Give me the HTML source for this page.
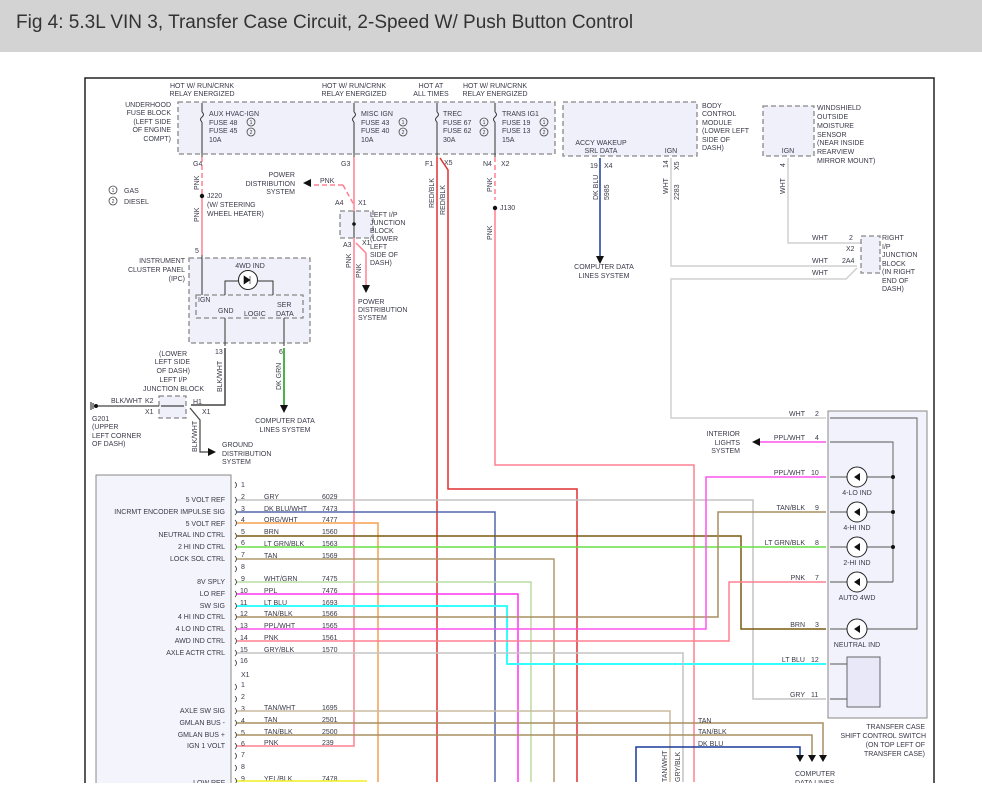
<!DOCTYPE html>
<html><head><meta charset="utf-8"><style>
html,body{margin:0;padding:0;background:#fff;width:982px;height:805px;overflow:hidden}
.hdr{position:absolute;left:0;top:0;width:982px;height:52px;background:#d3d3d3}
.hdr span{position:absolute;left:16px;top:12px;font:19px "Liberation Sans",sans-serif;color:#333}
svg{position:absolute;left:0;top:0}
text{font-family:"Liberation Sans",sans-serif;font-size:7px;fill:#3a3a4a}
.r{text-anchor:end}.m{text-anchor:middle}
.d{fill:#f0f0fa;stroke:#888;stroke-width:1.3;stroke-dasharray:5 3}
.w{fill:none;stroke-width:1.5}
</style></head><body>
<div class="hdr"><span>Fig 4: 5.3L VIN 3, Transfer Case Circuit, 2-Speed W/ Push Button Control</span></div>
<svg width="982" height="805" viewBox="0 0 982 805">
<rect x="85" y="78" width="849" height="720" fill="#fff" stroke="#222" stroke-width="1.5"/>
<!-- fuse block -->
<rect class="d" x="178" y="102" width="377" height="52"/>
<g stroke="#333" stroke-width="1" fill="none">
<path d="M202 103V112M202 122V157M354 103V112M354 122V157M437 103V112M437 122V157M495 103V112M495 122V157"/>
<path d="M202 112q3 2.5 0 5q-3 2.5 0 5M354 112q3 2.5 0 5q-3 2.5 0 5M437 112q3 2.5 0 5q-3 2.5 0 5M495 112q3 2.5 0 5q-3 2.5 0 5"/>
</g>
<text x="202" y="88" class="m">HOT W/ RUN/CRNK</text><text x="202" y="96" class="m">RELAY ENERGIZED</text>
<text x="354" y="88" class="m">HOT W/ RUN/CRNK</text><text x="354" y="96" class="m">RELAY ENERGIZED</text>
<text x="431" y="88" class="m">HOT AT</text><text x="431" y="96" class="m">ALL TIMES</text>
<text x="495" y="88" class="m">HOT W/ RUN/CRNK</text><text x="495" y="96" class="m">RELAY ENERGIZED</text>
<text x="171" y="107" class="r">UNDERHOOD</text><text x="171" y="115" class="r">FUSE BLOCK</text><text x="171" y="124" class="r">(LEFT SIDE</text><text x="171" y="132" class="r">OF ENGINE</text><text x="171" y="141" class="r">COMPT)</text>
<g><text x="209" y="116">AUX HVAC-IGN</text><text x="209" y="125">FUSE 48</text><text x="209" y="133">FUSE 45</text><text x="209" y="142">10A</text>
<text x="361" y="116">MISC IGN</text><text x="361" y="125">FUSE 43</text><text x="361" y="133">FUSE 40</text><text x="361" y="142">10A</text>
<text x="443" y="116">TREC</text><text x="443" y="125">FUSE 67</text><text x="443" y="133">FUSE 62</text><text x="443" y="142">30A</text>
<text x="502" y="116">TRANS IG1</text><text x="502" y="125">FUSE 19</text><text x="502" y="133">FUSE 13</text><text x="502" y="142">15A</text></g>
<g fill="none" stroke="#444" stroke-width=".8"><circle cx="251" cy="122" r="4"/><circle cx="251" cy="132" r="4"/><circle cx="403" cy="122" r="4"/><circle cx="403" cy="132" r="4"/><circle cx="484" cy="122" r="4"/><circle cx="484" cy="132" r="4"/><circle cx="544" cy="122" r="4"/><circle cx="544" cy="132" r="4"/><circle cx="113" cy="190" r="4"/><circle cx="113" cy="201" r="4"/></g>
<g><text x="251" y="124" class="m" style="font-size:5px">1</text><text x="251" y="134" class="m" style="font-size:5px">2</text><text x="403" y="124" class="m" style="font-size:5px">1</text><text x="403" y="134" class="m" style="font-size:5px">2</text><text x="484" y="124" class="m" style="font-size:5px">1</text><text x="484" y="134" class="m" style="font-size:5px">2</text><text x="544" y="124" class="m" style="font-size:5px">1</text><text x="544" y="134" class="m" style="font-size:5px">2</text><text x="113" y="192" class="m" style="font-size:5px">1</text><text x="113" y="203" class="m" style="font-size:5px">2</text></g>
<text x="124" y="193">GAS</text><text x="124" y="204">DIESEL</text>
<text x="193" y="166">G4</text><text x="341" y="166">G3</text><text x="425" y="166">F1</text><text x="444" y="165">X5</text><text x="483" y="166">N4</text><text x="501" y="166">X2</text>
<!-- wires top -->
<path class="w" stroke="#ff8090" stroke-dasharray="5 3" d="M202 157V195"/>
<path class="w" stroke="#ff8090" d="M202 197V255"/>
<circle cx="202" cy="196" r="2.2" fill="#111"/><text x="207" y="198">J220</text><text x="207" y="207">(W/ STEERING</text><text x="207" y="216">WHEEL HEATER)</text>
<text x="199" y="190" transform="rotate(-90 199 190)">PNK</text>
<text x="199" y="222" transform="rotate(-90 199 222)">PNK</text>
<path class="w" stroke="#ff8090" d="M354 157V746H237"/>
<path class="w" stroke="#ff8090" stroke-dasharray="5 3" d="M343 185H310M343 185L354 205"/>
<path d="M303 183l8-4v8z" fill="#111"/>
<text x="320" y="183">PNK</text>
<text x="295" y="177" class="r">POWER</text><text x="295" y="186" class="r">DISTRIBUTION</text><text x="295" y="194" class="r">SYSTEM</text>
<rect class="d" x="340" y="211" width="33" height="27"/>
<path stroke="#333" d="M354 211V238"/><circle cx="354" cy="224" r="1.8" fill="#111"/>
<text x="335" y="205">A4</text><text x="358" y="205">X1</text><text x="343" y="247">A3</text><text x="362" y="245">X1</text>
<g><text x="370" y="217">LEFT I/P</text><text x="370" y="225">JUNCTION</text><text x="370" y="233">BLOCK</text><text x="370" y="241">(LOWER</text><text x="370" y="249">LEFT</text><text x="370" y="257">SIDE OF</text><text x="370" y="265">DASH)</text></g>
<path class="w" stroke="#ff8090" d="M356 243L366 253V285"/><path d="M362 285h8l-4 8z" fill="#111"/>
<text x="351" y="268" transform="rotate(-90 351 268)">PNK</text><text x="361" y="278" transform="rotate(-90 361 278)">PNK</text>
<text x="358" y="304">POWER</text><text x="358" y="312">DISTRIBUTION</text><text x="358" y="320">SYSTEM</text>
<path class="w" stroke="#e03030" d="M437 157V782M440 158L448 170V489H577V782"/>
<text x="434" y="208" transform="rotate(-90 434 208)">RED/BLK</text><text x="445" y="215" transform="rotate(-90 445 215)">RED/BLK</text>
<path class="w" stroke="#ff8090" stroke-dasharray="5 3" d="M495 157V200"/>
<path class="w" stroke="#ff8090" d="M495 210V465H694V782"/>
<circle cx="495" cy="208" r="2.2" fill="#111"/><text x="500" y="210">J130</text>
<text x="492" y="192" transform="rotate(-90 492 192)">PNK</text><text x="492" y="240" transform="rotate(-90 492 240)">PNK</text>
<!-- BCM -->
<rect class="d" x="563" y="102" width="134" height="54"/>
<g><text x="702" y="108">BODY</text><text x="702" y="116">CONTROL</text><text x="702" y="125">MODULE</text><text x="702" y="133">(LOWER LEFT</text><text x="702" y="142">SIDE OF</text><text x="702" y="150">DASH)</text></g>
<text x="601" y="145" class="m">ACCY WAKEUP</text><text x="601" y="153" class="m">SRL DATA</text><text x="671" y="153" class="m">IGN</text>
<text x="590" y="168">19</text><text x="604" y="168">X4</text>
<path class="w" stroke="#1a3a9a" d="M600 158V256"/><path d="M596 256h8l-4 8z" fill="#111"/>
<text x="598" y="200" transform="rotate(-90 598 200)">DK BLU</text><text x="609" y="200" transform="rotate(-90 609 200)">5985</text>
<text x="604" y="269" class="m">COMPUTER DATA</text><text x="604" y="278" class="m">LINES SYSTEM</text>
<text x="668" y="168" transform="rotate(-90 668 168)">14</text><text x="679" y="170" transform="rotate(-90 679 170)">X5</text>
<text x="668" y="194" transform="rotate(-90 668 194)">WHT</text><text x="679" y="200" transform="rotate(-90 679 200)">2283</text>
<path class="w" stroke="#d0d0d0" d="M671 158V266H857M857 268L846 279H671V418H826"/>
<rect class="d" x="763" y="106" width="51" height="50"/>
<text x="788" y="153" class="m">IGN</text>
<g><text x="817" y="110">WINDSHIELD</text><text x="817" y="119">OUTSIDE</text><text x="817" y="128">MOISTURE</text><text x="817" y="137">SENSOR</text><text x="817" y="145">(NEAR INSIDE</text><text x="817" y="154">REARVIEW</text><text x="817" y="163">MIRROR MOUNT)</text></g>
<text x="785" y="167" transform="rotate(-90 785 167)">4</text><text x="785" y="194" transform="rotate(-90 785 194)">WHT</text>
<path class="w" stroke="#d0d0d0" d="M788 158V243H861"/>
<rect class="d" x="861" y="236" width="19" height="37"/>
<text x="812" y="240">WHT</text><text x="849" y="240">2</text><text x="846" y="251">X2</text><text x="812" y="263">WHT</text><text x="842" y="263">2A4</text><text x="812" y="275">WHT</text>
<g><text x="882" y="240">RIGHT</text><text x="882" y="249">I/P</text><text x="882" y="257">JUNCTION</text><text x="882" y="266">BLOCK</text><text x="882" y="274">(IN RIGHT</text><text x="882" y="283">END OF</text><text x="882" y="291">DASH)</text></g>
<!-- IPC -->
<rect class="d" x="189" y="258" width="121" height="85"/>
<rect class="d" x="196" y="295" width="107" height="23"/>
<text x="250" y="268" class="m">4WD IND</text>
<circle cx="248" cy="280" r="9.5" fill="#fff" stroke="#222"/><path d="M244 276l6 4-6 4zM250 276v8" fill="#111" stroke="#111" stroke-width=".6"/>
<path d="M225 295V281H238M258 281H273V295" fill="none" stroke="#333"/>
<path d="M202 255V295" stroke="#333"/>
<text x="198" y="302">IGN</text><text x="218" y="313">GND</text><text x="244" y="316">LOGIC</text><text x="277" y="307">SER</text><text x="276" y="316">DATA</text>
<text x="185" y="263" class="r">INSTRUMENT</text><text x="185" y="272" class="r">CLUSTER PANEL</text><text x="185" y="281" class="r">(IPC)</text>
<text x="195" y="253">5</text>
<path d="M225 318V346M284 318V346" stroke="#333"/>
<text x="215" y="354">13</text><text x="279" y="354">6</text>
<path class="w" stroke="#444" d="M225 348V405H191"/>
<text x="222" y="392" transform="rotate(-90 222 392)">BLK/WHT</text>
<path class="w" stroke="#119911" d="M284 348V405"/><path d="M280 405h8l-4 8z" fill="#111"/>
<text x="281" y="390" transform="rotate(-90 281 390)">DK GRN</text>
<text x="285" y="423" class="m">COMPUTER DATA</text><text x="285" y="432" class="m">LINES SYSTEM</text>
<text x="187" y="356" class="r">(LOWER</text><text x="190" y="364" class="r">LEFT SIDE</text><text x="190" y="373" class="r">OF DASH)</text><text x="187" y="382" class="r">LEFT I/P</text><text x="204" y="391" class="r">JUNCTION BLOCK</text>
<rect class="d" x="159" y="396" width="27" height="22"/>
<path fill="none" stroke="#444" stroke-width="1.2" d="M95 406H159M161 406H184M190 408L200 420V452H208"/>
<path d="M208 448l8 4-8 4z" fill="#111"/>
<path d="M91 402v8M93 403v6" stroke="#111"/><circle cx="96" cy="406" r="2" fill="#111"/>
<text x="111" y="403">BLK/WHT</text><text x="145" y="403">K2</text><text x="145" y="414">X1</text><text x="193" y="404">H1</text><text x="202" y="414">X1</text>
<text x="92" y="421">G201</text><text x="92" y="429">(UPPER</text><text x="92" y="438">LEFT CORNER</text><text x="92" y="446">OF DASH)</text>
<text x="197" y="452" transform="rotate(-90 197 452)">BLK/WHT</text>
<text x="222" y="447">GROUND</text><text x="222" y="456">DISTRIBUTION</text><text x="222" y="464">SYSTEM</text>
<!-- module -->
<rect x="96" y="475" width="135" height="320" fill="#f4f4fc" stroke="#888"/>
<g>
<text x="225" y="502" class="r">5 VOLT REF</text><text x="225" y="514" class="r">INCRMT ENCODER IMPULSE SIG</text><text x="225" y="526" class="r">5 VOLT REF</text><text x="225" y="537" class="r">NEUTRAL IND CTRL</text><text x="225" y="549" class="r">2 HI IND CTRL</text><text x="225" y="561" class="r">LOCK SOL CTRL</text><text x="225" y="584" class="r">8V SPLY</text><text x="225" y="596" class="r">LO REF</text><text x="225" y="608" class="r">SW SIG</text><text x="225" y="619" class="r">4 HI IND CTRL</text><text x="225" y="631" class="r">4 LO IND CTRL</text><text x="225" y="643" class="r">AWD IND CTRL</text><text x="225" y="655" class="r">AXLE ACTR CTRL</text><text x="225" y="713" class="r">AXLE SW SIG</text><text x="225" y="725" class="r">GMLAN BUS -</text><text x="225" y="737" class="r">GMLAN BUS +</text><text x="225" y="748" class="r">IGN 1 VOLT</text><text x="225" y="785" class="r">LOW REF</text></g>
<g style="font-size:6.5px">
<text x="241" y="487">1</text><text x="241" y="499">2</text><text x="241" y="511">3</text><text x="241" y="522">4</text><text x="241" y="534">5</text><text x="241" y="545">6</text><text x="241" y="557">7</text><text x="241" y="569">8</text><text x="241" y="581">9</text><text x="240" y="593">10</text><text x="240" y="605">11</text><text x="240" y="616">12</text><text x="240" y="628">13</text><text x="240" y="640">14</text><text x="240" y="652">15</text><text x="240" y="663">16</text><text x="241" y="677">X1</text><text x="241" y="687">1</text><text x="241" y="699">2</text><text x="241" y="711">3</text><text x="241" y="723">4</text><text x="241" y="735">5</text><text x="241" y="746">6</text><text x="241" y="757">7</text><text x="241" y="769">8</text><text x="241" y="781">9</text></g>
<g fill="none" stroke="#333" stroke-width=".8"><path d="M235 482q3 3 0 6M235 497q3 3 0 6M235 509q3 3 0 6M235 520q3 3 0 6M235 533q3 3 0 6M235 544q3 3 0 6M235 556q3 3 0 6M235 566q3 3 0 6M235 579q3 3 0 6M235 591q3 3 0 6M235 603q3 3 0 6M235 614q3 3 0 6M235 626q3 3 0 6M235 638q3 3 0 6M235 650q3 3 0 6M235 660q3 3 0 6M235 684q3 3 0 6M235 696q3 3 0 6M235 708q3 3 0 6M235 720q3 3 0 6M235 732q3 3 0 6M235 743q3 3 0 6M235 753q3 3 0 6M235 765q3 3 0 6M235 778q3 3 0 6"/></g>
<g style="font-size:6.5px">
<text x="264" y="499">GRY</text><text x="322" y="499">6029</text><text x="264" y="511">DK BLU/WHT</text><text x="322" y="511">7473</text><text x="264" y="522">ORG/WHT</text><text x="322" y="522">7477</text><text x="264" y="534">BRN</text><text x="322" y="534">1560</text><text x="264" y="546">LT GRN/BLK</text><text x="322" y="546">1563</text><text x="264" y="558">TAN</text><text x="322" y="558">1569</text><text x="264" y="581">WHT/GRN</text><text x="322" y="581">7475</text><text x="264" y="593">PPL</text><text x="322" y="593">7476</text><text x="264" y="605">LT BLU</text><text x="322" y="605">1693</text><text x="264" y="616">TAN/BLK</text><text x="322" y="616">1566</text><text x="264" y="628">PPL/WHT</text><text x="322" y="628">1565</text><text x="264" y="640">PNK</text><text x="322" y="640">1561</text><text x="264" y="652">GRY/BLK</text><text x="322" y="652">1570</text><text x="264" y="710">TAN/WHT</text><text x="322" y="710">1695</text><text x="264" y="722">TAN</text><text x="322" y="722">2501</text><text x="264" y="734">TAN/BLK</text><text x="322" y="734">2500</text><text x="264" y="745">PNK</text><text x="322" y="745">239</text><text x="264" y="781">YEL/BLK</text><text x="322" y="781">7478</text></g>
<g class="w" fill="none">
<path stroke="#c4c4c4" d="M237 500H753V699H826"/>
<path stroke="#5566aa" d="M237 512H495V782"/>
<path stroke="#f5a050" d="M237 523H378V782"/>
<path stroke="#7a5a10" d="M237 536H741V629H826"/>
<path stroke="#66e044" d="M237 547H826"/>
<path stroke="#b09a6a" d="M237 559H554V782"/>
<path stroke="#bcdca4" d="M237 582H531V782"/>
<path stroke="#ff33ee" d="M237 594H518V782"/>
<path stroke="#33ffff" stroke-width="2" d="M237 606H507V664H826"/>
<path stroke="#a89060" d="M237 617H718V512H826"/>
<path stroke="#ff55ee" d="M237 629H706V477H826"/>
<path stroke="#ff8090" d="M237 641H729V582H826"/>
<path stroke="#c4c4c4" d="M237 653H683V782"/>
<path stroke="#c8bca0" d="M237 711H670V782"/>
<path stroke="#a89060" d="M237 723H823V755"/>
<path stroke="#a89060" d="M237 735H812V755"/>
<path stroke="#1a3a9a" d="M636 782V747H800V755"/>
<path stroke="#eeee22" d="M237 781H367"/>
<path stroke="#ff55ee" d="M760 442H826"/>
</g>
<path d="M796 755h8l-4 7zM808 755h8l-4 7zM819 755h8l-4 7z" fill="#111"/>
<text x="795" y="776">COMPUTER</text><text x="795" y="785">DATA LINES</text>
<text x="698" y="723">TAN</text><text x="698" y="734">TAN/BLK</text><text x="698" y="746">DK BLU</text>
<text x="667" y="782" transform="rotate(-90 667 782)">TAN/WHT</text><text x="680" y="782" transform="rotate(-90 680 782)">GRY/BLK</text>
<!-- switch -->
<path d="M752 442l8-4v8z" fill="#111"/>
<text x="740" y="436" class="r">INTERIOR</text><text x="740" y="445" class="r">LIGHTS</text><text x="740" y="453" class="r">SYSTEM</text>
<rect x="828" y="411" width="99" height="307" fill="#f2f2fc" stroke="#888"/>
<g style="font-size:6.5px">
<text x="805" y="416" class="r">WHT</text><text x="815" y="416">2</text>
<text x="805" y="440" class="r">PPL/WHT</text><text x="815" y="440">4</text>
<text x="805" y="475" class="r">PPL/WHT</text><text x="811" y="475">10</text>
<text x="805" y="510" class="r">TAN/BLK</text><text x="815" y="510">9</text>
<text x="805" y="545" class="r">LT GRN/BLK</text><text x="815" y="545">8</text>
<text x="805" y="580" class="r">PNK</text><text x="815" y="580">7</text>
<text x="805" y="627" class="r">BRN</text><text x="815" y="627">3</text>
<text x="805" y="662" class="r">LT BLU</text><text x="811" y="662">12</text>
<text x="805" y="697" class="r">GRY</text><text x="811" y="697">11</text></g>
<g fill="none" stroke="#555" stroke-width=".9">
<path d="M830 418H917V629H830M830 442H893V582M830 477H893M830 512H893M830 547H893M830 582H893M830 664H847M830 699H847"/>
</g>
<g fill="#111"><circle cx="893" cy="477" r="2"/><circle cx="893" cy="512" r="2"/><circle cx="893" cy="547" r="2"/></g>
<g stroke="#222" fill="#fff"><circle cx="857" cy="477" r="10"/><circle cx="857" cy="512" r="10"/><circle cx="857" cy="547" r="10"/><circle cx="857" cy="582" r="10"/><circle cx="857" cy="629" r="10"/></g>
<g fill="#111"><path d="M860 473l-6 4 6 4z"/><path d="M860 508l-6 4 6 4z"/><path d="M860 543l-6 4 6 4z"/><path d="M860 578l-6 4 6 4z"/><path d="M860 625l-6 4 6 4z"/></g>
<rect x="847" y="657" width="33" height="50" fill="#e8e8f8" stroke="#666"/>
<text x="857" y="495" class="m">4-LO IND</text><text x="857" y="530" class="m">4-HI IND</text><text x="857" y="565" class="m">2-HI IND</text><text x="857" y="600" class="m">AUTO 4WD</text><text x="857" y="647" class="m">NEUTRAL IND</text>
<text x="925" y="729" class="r">TRANSFER CASE</text><text x="926" y="738" class="r">SHIFT CONTROL SWITCH</text><text x="925" y="747" class="r">(ON TOP LEFT OF</text><text x="925" y="756" class="r">TRANSFER CASE)</text>
<rect x="0" y="783" width="982" height="22" fill="#fff"/>
</svg>
</body></html>
